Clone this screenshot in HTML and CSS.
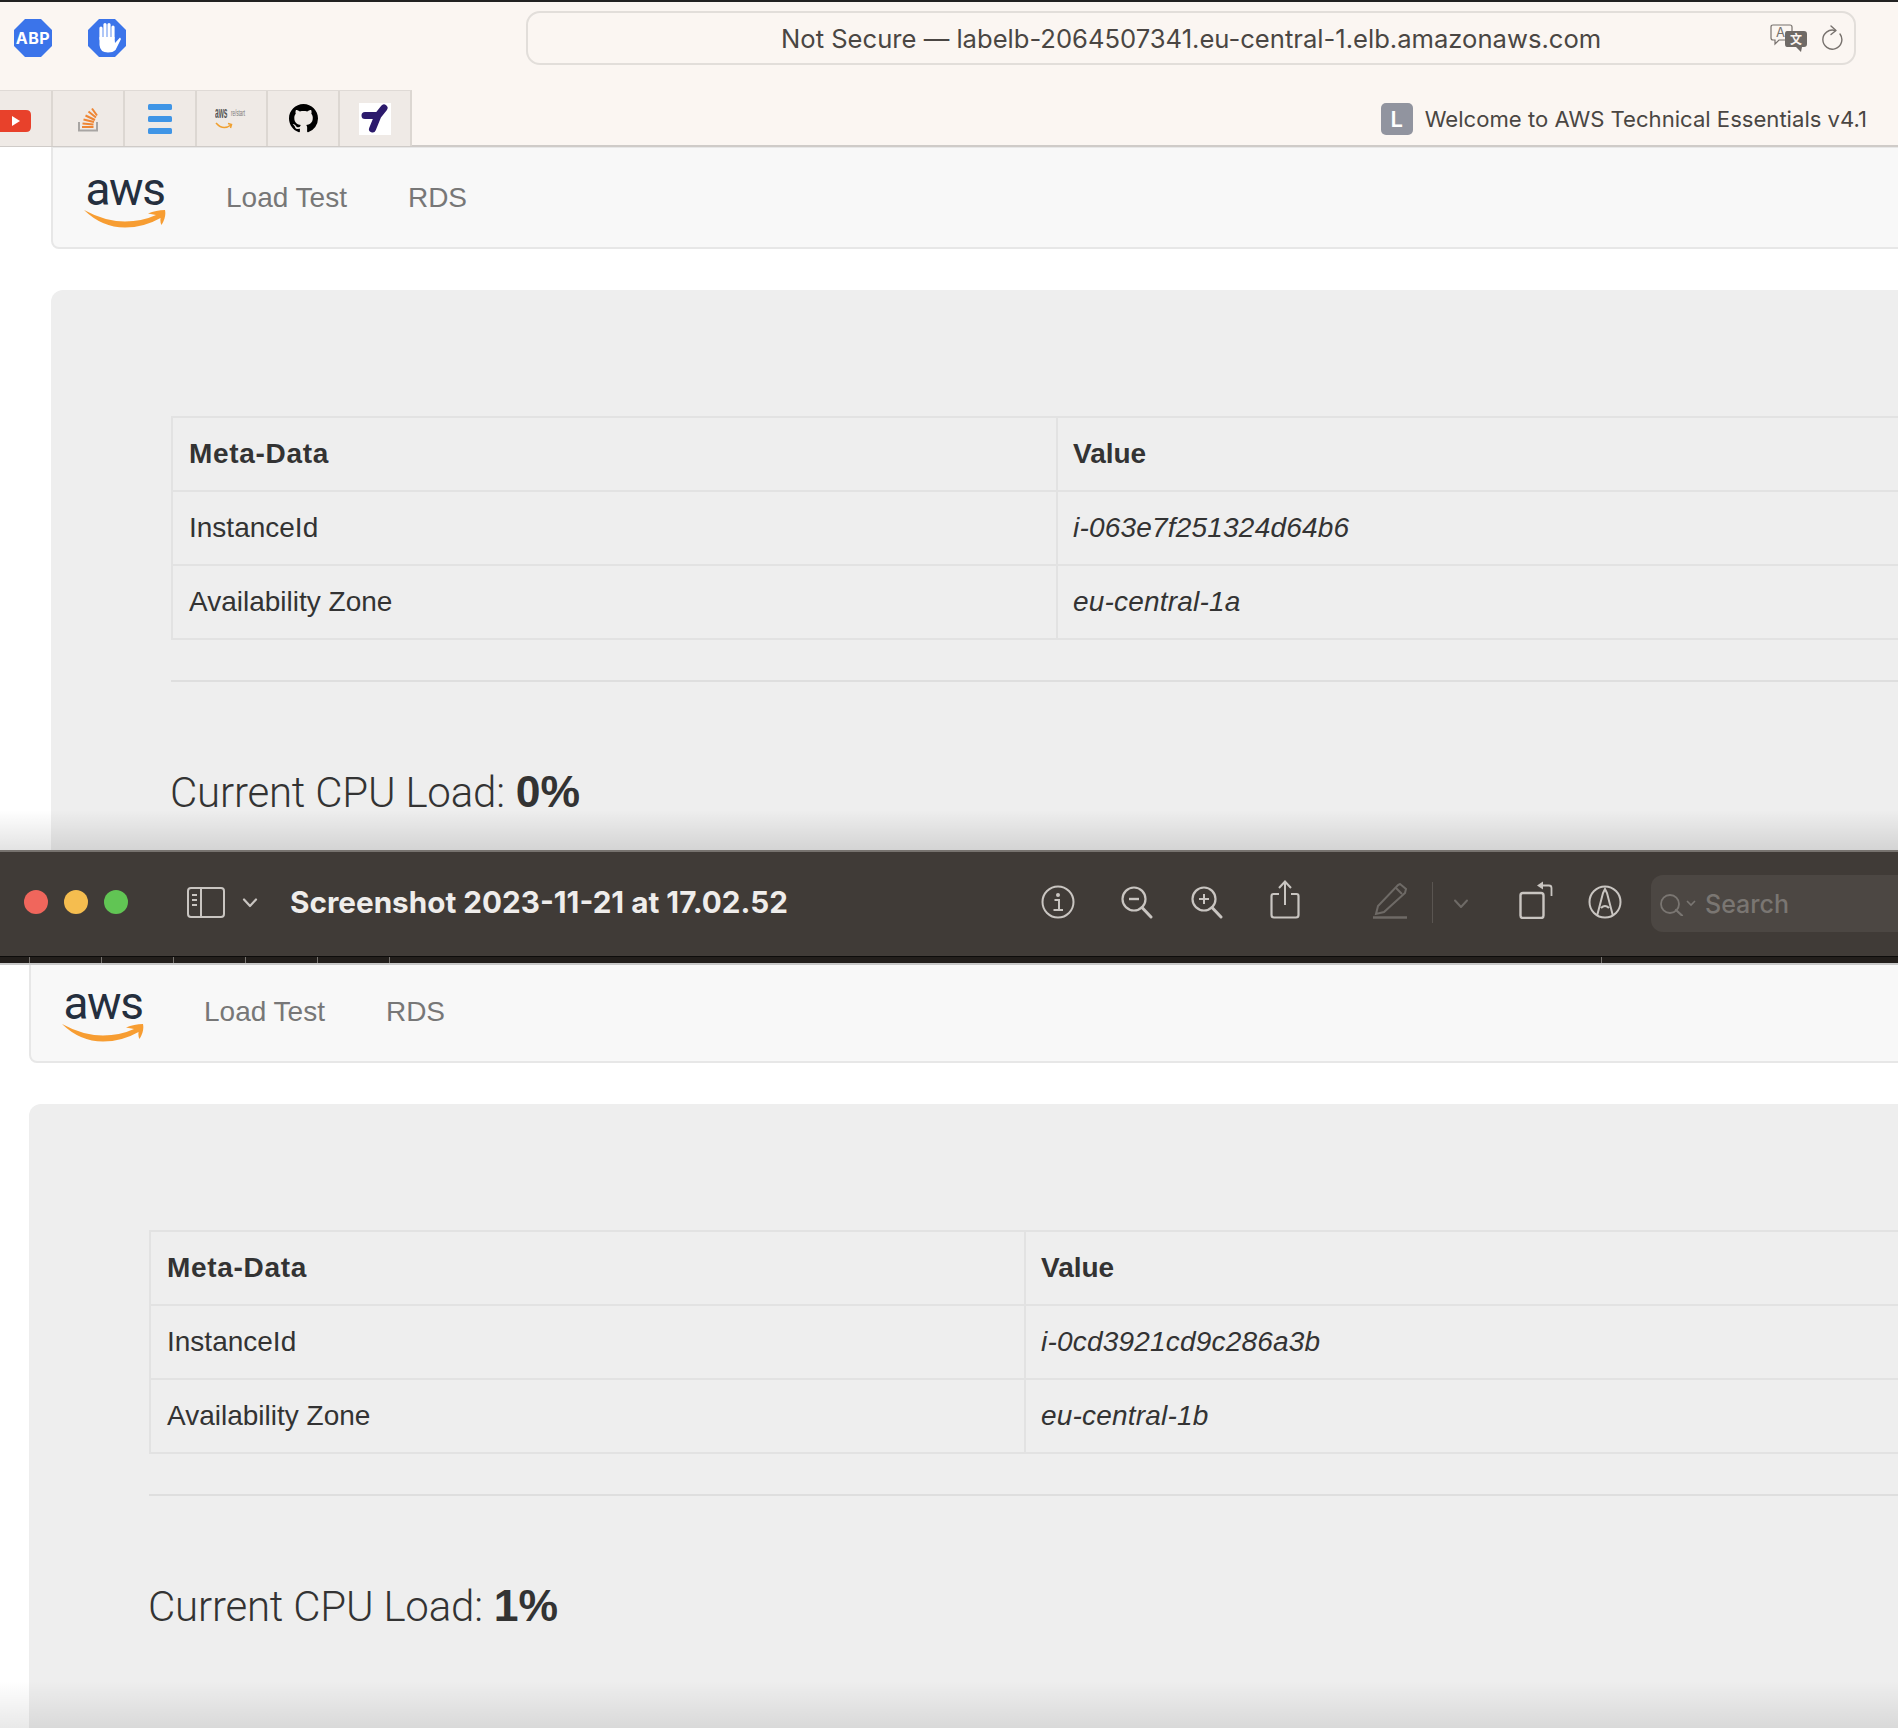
FILE: index.html
```html
<!DOCTYPE html>
<html lang="en">
<head>
<meta charset="utf-8">
<title>Load Test</title>
<link rel="stylesheet" href="styles.css">
</head>
<body>
<header class="browser">
  <div class="browser-top">
    <svg class="ext" viewBox="0 0 38 38"><polygon points="11,0 27,0 38,11 38,27 27,38 11,38 0,27 0,11" fill="#3b74ea"/><text x="19" y="25" text-anchor="middle" class="abp-text">ABP</text></svg>
    <svg class="ext ext-hand" viewBox="0 0 38 38"><polygon points="11,0 27,0 38,11 38,27 27,38 11,38 0,27 0,11" fill="#3b74ea"/><path d="M13 20V9M17 18V5.500M21 18V5.500M25 19V8" stroke="#fff" stroke-width="3.200" stroke-linecap="round" fill="none"/><path d="M11.500 18H26.500L27 24L32 18.500L33 20L27.500 31Q25 33.500 20 33.500Q12 33.500 11.500 26Z" fill="#fff"/></svg>
    <div class="url">
      <span class="url-text">Not Secure — labelb-2064507341.eu-central-1.elb.amazonaws.com</span>
      <svg class="translate" viewBox="0 0 37 28"><path d="M3 1H20Q22 1 22 3V14Q22 16 20 16H9L5 20V16H3Q1 16 1 14V3Q1 1 3 1Z" fill="#fbf6f2" stroke="#77716d" stroke-width="1.200"/><text x="6" y="13" class="tr-a">A</text><path d="M17 7H34Q37 7 37 10V20Q37 23 34 23H32L31 28L26 23H17Q15 23 15 20V10Q15 7 17 7Z" fill="#6f6a66"/><text x="26" y="20" text-anchor="middle" class="tr-b">文</text></svg>
      <svg class="reload" viewBox="0 0 22 26"><path d="M14 5.500A9.500 9.500 0 1 0 19 9" fill="none" stroke="#77716d" stroke-width="1.400" stroke-linecap="round"/><path d="M10 1L15 5.500L10 9.500" fill="none" stroke="#77716d" stroke-width="1.400" stroke-linecap="round" stroke-linejoin="round"/></svg>
    </div>
  </div>
  <div class="browser-tabs">
    <nav class="favs">
      <div class="fav fav-first"><svg class="yt" viewBox="0 0 31 22"><path d="M0 0H26Q31 0 31 5V17Q31 22 26 22H0Z" fill="#e8412b"/><path d="M12 6L20 11L12 16Z" fill="#fff"/></svg></div>
      <div class="fav"><svg class="so" viewBox="0 0 20 26"><path d="M1 16V24.500H19V16" fill="none" stroke="#a8a5a3" stroke-width="2"/><path d="M4 21H15.500M4.500 17.500L15.500 18.500M5.500 13.500L16 16M7.500 9.500L17 14M10.500 5.500L18 11.500M14 2.500L19 9.500" stroke="#ee8635" stroke-width="2" fill="none"/></svg></div>
      <div class="fav"><svg class="menu" viewBox="0 0 24 30"><rect width="24" height="6" rx="1.500" fill="#3f95e6"/><rect y="12" width="24" height="6" rx="1.500" fill="#3f95e6"/><rect y="24" width="24" height="6" rx="1.500" fill="#3f95e6"/></svg></div>
      <div class="fav"><svg class="restart" viewBox="0 0 32 30"><text transform="translate(0 14) scale(.6 1.500)" class="rs-aws">aws</text><text transform="translate(16 12) scale(.7 1.500)" class="rs-re">re/start</text><path d="M1 19Q8 27 16 21M13 19.500L16.500 20.500L15.500 24" fill="none" stroke="#f0a030" stroke-width="1.500"/></svg></div>
      <div class="fav"><svg class="gh" viewBox="0 0 16 16"><path fill="#000" d="M8 0C3.580 0 0 3.580 0 8c0 3.540 2.290 6.530 5.470 7.590.4.070.55-.17.55-.38 0-.19-.01-.82-.01-1.490-2.010.37-2.530-.49-2.690-.94-.09-.23-.48-.94-.82-1.130-.28-.15-.68-.52-.01-.53.63-.01 1.080.58 1.230.82.72 1.210 1.870.87 2.330.66.070-.52.28-.87.51-1.070-1.780-.2-3.640-.89-3.640-3.950 0-.87.31-1.590.82-2.150-.08-.2-.36-1.020.08-2.120 0 0 .67-.21 2.200.82.64-.18 1.320-.27 2-.27.68 0 1.360.09 2 .27 1.530-1.040 2.200-.82 2.200-.82.44 1.100.16 1.920.08 2.120.51.56.82 1.270.82 2.150 0 3.070-1.870 3.750-3.650 3.950.29.25.54.73.54 1.480 0 1.070-.01 1.930-.01 2.200 0 .21.15.46.55.38A8.013 8.013 0 0016 8c0-4.420-3.580-8-8-8z"/></svg></div>
      <div class="fav"><svg class="tile" viewBox="0 0 32 32"><rect width="32" height="32" fill="#fff"/><path d="M6 12.500H19L25 5M19 12.500L13.500 26" fill="none" stroke="#2c1a6c" stroke-width="7" stroke-linecap="round" stroke-linejoin="round"/></svg></div>
    </nav>
    <div class="active-tab">
      <span class="tab-icon">L</span>
      <span class="tab-title">Welcome to AWS Technical Essentials v4.1</span>
    </div>
  </div>
</header>

<main class="page page-one">
  <div class="navbar">
    <div class="logo"><span class="logo-word">aws</span><svg class="smile" viewBox="0 0 82 20"><path d="M0 2Q21 13.500 41 13.500Q58 13.500 72 7L64 5.500Q72 2 81 2Q82.500 9 77.500 17Q76 15 76.500 10Q60 19.500 41 19.500Q18 19.500 0 2Z" fill="#f79d32"/></svg></div>
    <a class="nav-link nav-load">Load Test</a>
    <a class="nav-link nav-rds">RDS</a>
  </div>
  <section class="jumbotron">
    <table class="meta meta-one">
      <thead><tr><th class="col-key">Meta-Data</th><th>Value</th></tr></thead>
      <tbody>
        <tr><td>InstanceId</td><td><i>i-063e7f251324d64b6</i></td></tr>
        <tr><td>Availability Zone</td><td><i>eu-central-1a</i></td></tr>
      </tbody>
    </table>
    <hr class="rule">
    <h2 class="cpu">Current CPU Load: <b>0%</b></h2>
  </section>
  <div class="fade fade-one"></div>
</main>

<section class="viewer">
  <div class="viewer-bar">
    <span class="dot dot-red"></span><span class="dot dot-yellow"></span><span class="dot dot-green"></span>
    <svg class="tool t-side" viewBox="0 0 38 31"><rect x="1" y="1" width="36" height="29" rx="3" fill="none" stroke="#c9c5c1" stroke-width="2"/><path d="M14 1V30" stroke="#c9c5c1" stroke-width="2"/><path d="M5 8H10M5 13H10M5 18H10" stroke="#c9c5c1" stroke-width="2"/></svg>
    <svg class="tool t-chev" viewBox="0 0 16 10"><path d="M2 1.500L8 8L14 1.500" fill="none" stroke="#c9c5c1" stroke-width="2.200" stroke-linecap="round" stroke-linejoin="round"/></svg>
    <span class="doc-title">Screenshot 2023-11-21 at 17.02.52</span>
    <svg class="tool t-info" viewBox="0 0 34 34"><circle cx="17" cy="17" r="15.500" fill="none" stroke="#c9c5c1" stroke-width="2"/><circle cx="17" cy="10" r="2" fill="#c9c5c1"/><path d="M13.500 15H18V24M12.500 25H22" fill="none" stroke="#c9c5c1" stroke-width="2"/></svg>
    <svg class="tool t-zoomout" viewBox="0 0 32 33"><circle cx="13" cy="13" r="11.500" fill="none" stroke="#c9c5c1" stroke-width="2.200"/><path d="M8 13H18" stroke="#c9c5c1" stroke-width="2.400"/><path d="M21 21.500L30 31" stroke="#c9c5c1" stroke-width="3" stroke-linecap="round"/></svg>
    <svg class="tool t-zoomin" viewBox="0 0 32 33"><circle cx="13" cy="13" r="11.500" fill="none" stroke="#c9c5c1" stroke-width="2.200"/><path d="M8 13H18M13 8V18" stroke="#c9c5c1" stroke-width="2"/><path d="M21 21.500L30 31" stroke="#c9c5c1" stroke-width="3" stroke-linecap="round"/></svg>
    <svg class="tool t-share" viewBox="0 0 30 39"><path d="M9 14H3.500Q1.500 14 1.500 16V35Q1.500 37.500 4 37.500H26Q28.500 37.500 28.500 35V16Q28.500 14 26.500 14H21" fill="none" stroke="#c9c5c1" stroke-width="2.200"/><path d="M15 25V2M9 8L15 1.500L21 8" fill="none" stroke="#c9c5c1" stroke-width="2"/></svg>
    <svg class="tool t-pen" viewBox="0 0 34 36"><path d="M27 1L33 6L32 10L11 29L3 31L5 23L25 2Z" fill="none" stroke="#6e6a66" stroke-width="2"/><path d="M23 5L29 11" stroke="#6e6a66" stroke-width="2"/><path d="M0 34.500H34" stroke="#6e6a66" stroke-width="2.400"/></svg>
    <span class="tool-sep"></span>
    <svg class="tool t-chev2" viewBox="0 0 16 10"><path d="M2 1.500L8 8L14 1.500" fill="none" stroke="#6e6a66" stroke-width="2" stroke-linecap="round" stroke-linejoin="round"/></svg>
    <svg class="tool t-rotate" viewBox="0 0 34 38"><rect x="1.500" y="12" width="23" height="25" rx="2.500" fill="none" stroke="#c9c5c1" stroke-width="2.400"/><path d="M32.500 15V7Q32.500 4.500 30 4.500H22" fill="none" stroke="#c9c5c1" stroke-width="1.800"/><path d="M24 0.500L18 4.500L24 8.500Z" fill="#c9c5c1"/></svg>
    <svg class="tool t-markup" viewBox="0 0 34 34"><circle cx="17" cy="17" r="15.500" fill="none" stroke="#c9c5c1" stroke-width="2"/><path d="M9 31L15 8L17 4L19 8L25 31M13 23Q17 19 21 23" fill="none" stroke="#c9c5c1" stroke-width="2"/></svg>
    <div class="search">
      <svg class="search-icon" viewBox="0 0 36 22"><circle cx="10" cy="10" r="9" fill="none" stroke="#7a7672" stroke-width="1.800"/><path d="M16 16L22 21.500" stroke="#7a7672" stroke-width="2.200" stroke-linecap="round"/><path d="M27 7L31 11L35 7" fill="none" stroke="#7a7672" stroke-width="1.600"/></svg>
      <span class="search-text">Search</span>
    </div>
  </div>
  <div class="viewer-ruler">
    <span class="tick tick-first"></span><span class="tick"></span><span class="tick"></span><span class="tick"></span><span class="tick"></span><span class="tick"></span><span class="tick tick-far"></span>
  </div>
</section>

<main class="page page-two">
  <div class="navbar">
    <div class="logo"><span class="logo-word">aws</span><svg class="smile" viewBox="0 0 82 20"><path d="M0 2Q21 13.500 41 13.500Q58 13.500 72 7L64 5.500Q72 2 81 2Q82.500 9 77.500 17Q76 15 76.500 10Q60 19.500 41 19.500Q18 19.500 0 2Z" fill="#f79d32"/></svg></div>
    <a class="nav-link nav-load">Load Test</a>
    <a class="nav-link nav-rds">RDS</a>
  </div>
  <section class="jumbotron">
    <table class="meta meta-two">
      <thead><tr><th class="col-key">Meta-Data</th><th>Value</th></tr></thead>
      <tbody>
        <tr><td>InstanceId</td><td><i>i-0cd3921cd9c286a3b</i></td></tr>
        <tr><td>Availability Zone</td><td><i>eu-central-1b</i></td></tr>
      </tbody>
    </table>
    <hr class="rule">
    <h2 class="cpu">Current CPU Load: <b>1%</b></h2>
  </section>
  <div class="fade fade-two"></div>
</main>
</body>
</html>
```
FILE: styles.css
```css
* { box-sizing: border-box; }
html, body { margin: 0; padding: 0; }
body {
  width: 1898px;
  height: 1728px;
  overflow: hidden;
  background: #fff;
  color: #333;
  font-family: "Liberation Sans", Arial, sans-serif;
}
svg { display: block; flex: none; }

/* Browser chrome */
.browser { height: 147px; background: #fbf6f2; border-top: 2px solid #222; border-bottom: 2px solid #cfcbc8; }
.browser-top { height: 88px; display: flex; align-items: flex-start; padding: 9px 0 0 14px; }
.ext { width: 38px; height: 38px; margin-top: 8px; }
.ext-hand { margin-left: 36px; }
.abp-text { font: 700 16px Inter, sans-serif; fill: #fff; letter-spacing: .5px; }
.url {
  width: 1330px; height: 54px; margin-left: 400px;
  border: 2px solid #e2deda; border-radius: 14px;
  display: flex; align-items: center; position: relative;
}
.url-text { position: absolute; left: 253px; font: 400 25.600px Inter, sans-serif; color: #4a4643; white-space: nowrap; }
.translate { width: 37px; height: 28px; margin-left: 1242px; }
.tr-a { font: 400 13px Inter, sans-serif; fill: #77716d; }
.tr-b { font: 700 12px "Noto Sans CJK SC", sans-serif; fill: #fbf6f2; }
.reload { width: 22px; height: 26px; margin-left: 14px; }

.browser-tabs { height: 56px; display: flex; justify-content: space-between; }
.favs { display: flex; width: 412px; background: #efeae6; border-top: 1px solid #dfdad6; border-right: 2px solid #dcd7d2; }
.fav { width: 72px; border-left: 2px solid #dcd7d2; display: flex; align-items: center; justify-content: center; }
.fav-first { width: 51px; border-left: 0; justify-content: flex-start; }
.yt { width: 31px; height: 22px; margin-top: 5px; }
.so { width: 20px; height: 26px; margin-top: 1px; }
.menu { width: 24px; height: 30px; }
.restart { width: 32px; height: 30px; }
.rs-aws { font: 700 11px "Liberation Sans", sans-serif; fill: #555; }
.rs-re { font: 400 6.500px "Liberation Sans", sans-serif; fill: #777; }
.gh { width: 29px; height: 29px; }
.tile { width: 32px; height: 32px; }

.active-tab { display: flex; align-items: center; padding: 2px 31px 0 0; gap: 12px; }
.tab-icon {
  width: 32px; height: 32px; border-radius: 5px; background: #91949f; color: #fff;
  display: flex; align-items: center; justify-content: center;
  font: 600 22px Inter, sans-serif;
}
.tab-title { font: 400 22.100px Inter, sans-serif; color: #4a4643; white-space: nowrap; }

/* Page */
.page { position: relative; overflow: hidden; }
.page-one { height: 703px; padding-left: 51px; }
.page-two { height: 768px; margin-top: -4px; padding-left: 29px; }
.navbar {
  height: 102px; margin-right: -20px;
  background: #f8f8f8; border: 2px solid #e7e7e7; border-top-width: 1px; border-radius: 0 0 0 8px;
  display: flex; align-items: center;
}
.logo { width: 82px; margin-left: 31px; padding-top: 2px; display: flex; flex-direction: column; align-items: center; }
.logo-word { font: 400 46px/38px Roboto, sans-serif; color: #252f3e; letter-spacing: -1.500px; }
.smile { width: 82px; height: 20px; }
.nav-link { font-size: 28px; color: #777; }
.nav-load { margin-left: 60px; }
.nav-rds { margin-left: 61px; }

.jumbotron {
  margin: 41px -20px 0 0;
  padding: 126px 0 0 120px;
  height: 900px;
  background: #eee;
  border-radius: 12px 0 0 0;
}
.meta { border-collapse: collapse; table-layout: fixed; width: 1800px; font-size: 28px; }
.meta-one .col-key { width: 885px; }
.meta-two .col-key { width: 875px; }
.meta th, .meta td {
  height: 74px; padding: 0 16px; text-align: left; color: #333;
  border: 2px solid #e2e2e2;
}
.meta th { font-weight: 700; }
.meta th.col-key { letter-spacing: .7px; }
.meta th + th, .meta td + td { padding-left: 15px; }
.meta i { letter-spacing: .2px; }
.rule { margin: 40px 0 0; border: 0; border-top: 2px solid #dedede; width: 1800px; }
.cpu {
  margin: 86px 0 0 -1px; font: 300 42px/48px Roboto, sans-serif; color: #333; letter-spacing: -.2px;
}
.cpu b { font: 700 44.500px/48px "Liberation Sans", sans-serif; letter-spacing: 0; margin-left: 1px; }
.fade { position: absolute; left: 0; right: 0; bottom: 0; }
.fade-one { height: 40px; background: linear-gradient(rgba(0,0,0,0), rgba(0,0,0,.11)); }
.fade-two { height: 48px; background: linear-gradient(rgba(0,0,0,0), rgba(0,0,0,.09)); }

/* Preview toolbar */
.viewer { height: 115px; position: relative; z-index: 1; overflow: hidden; }
.viewer-bar {
  height: 107px; background: #403b37; border-top: 2px solid #77736f; border-bottom: 1px solid #0d0c0b;
  display: flex; align-items: center; padding: 0 0 4px 24px;
}
.dot { flex: none; width: 24px; height: 24px; border-radius: 50%; margin-right: 16px; }
.dot-red { background: #f0665c; }
.dot-yellow { background: #f5bd4f; }
.dot-green { background: #61c554; }
.tool { flex: none; }
.t-side { width: 38px; height: 31px; margin-left: 43px; }
.t-chev { width: 16px; height: 10px; margin-left: 17px; margin-top: 1px; }
.doc-title { flex: none; margin-left: 32px; width: 730px; font: 700 29.700px Inter, sans-serif; color: #efedeb; white-space: nowrap; }
.t-info { width: 34px; height: 34px; margin-left: 21px; }
.t-zoomout { width: 32px; height: 33px; margin-left: 46px; }
.t-zoomin { width: 32px; height: 33px; margin-left: 38px; }
.t-share { width: 30px; height: 39px; margin-left: 47px; margin-top: -6px; }
.t-pen { width: 34px; height: 36px; margin-left: 73px; margin-top: -3px; }
.tool-sep { flex: none; width: 1px; height: 41px; margin-left: 25px; background: #5a5551; }
.t-chev2 { width: 16px; height: 10px; margin-left: 20px; margin-top: 3px; }
.t-rotate { width: 34px; height: 38px; margin-left: 50px; margin-top: -4px; }
.t-markup { width: 34px; height: 34px; margin-left: 35px; }
.search {
  width: 260px; height: 57px; margin-left: 29px; margin-top: 3px; flex: none;
  background: #4c4743; border-radius: 12px 0 0 12px;
  display: flex; align-items: center; padding-left: 9px;
}
.search-icon { width: 36px; height: 22px; margin-top: 2px; }
.search-text { margin-left: 9px; font: 500 25px Inter, sans-serif; color: #7a7672; }
.viewer-ruler {
  height: 8px; background: #221e1b; border-bottom: 2px solid #c8c8c8;
  display: flex; align-items: stretch;
}
.tick { flex: none; width: 1px; margin-right: 71px; background: #77736f; }
.tick-first { margin-left: 29px; }
.tick-far { margin-left: 1140px; }
```
